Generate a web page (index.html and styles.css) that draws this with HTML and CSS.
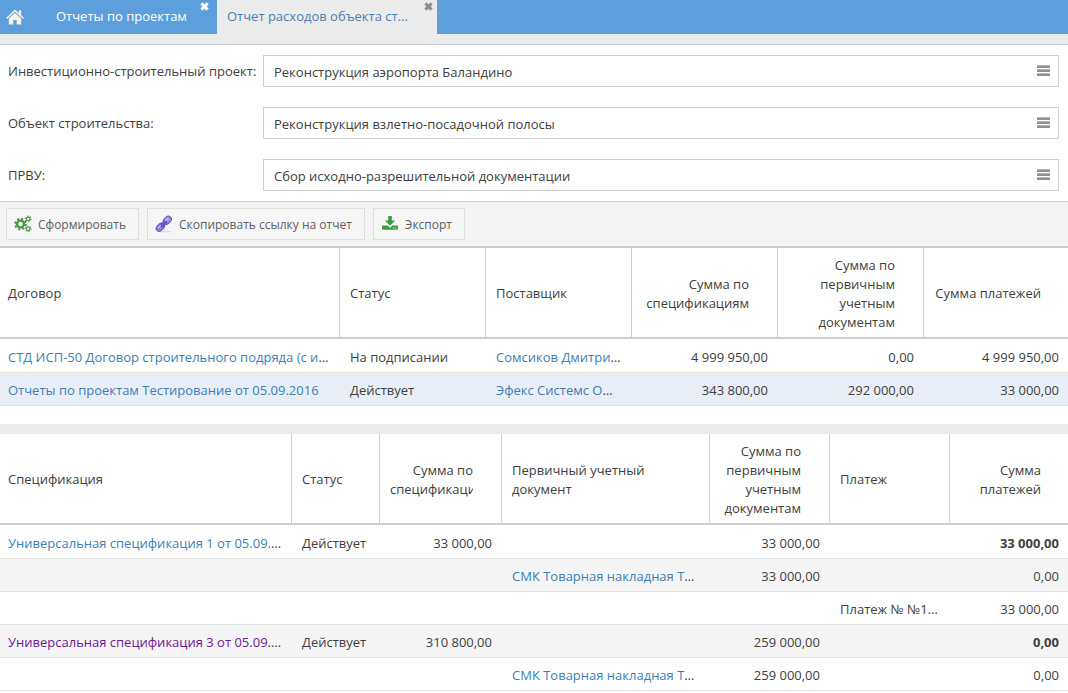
FILE: index.html
```html
<!DOCTYPE html>
<html lang="ru">
<head>
<meta charset="utf-8">
<meta name="viewport" content="width=device-width, initial-scale=1">
<title>Отчет расходов объекта строительства</title>
<link rel="stylesheet" href="styles.css">
</head>
<body>
<nav class="tabs">
  <a class="tab-home" href="#" aria-label="Домой">
    <svg width="18" height="16" viewBox="0 0 18 16" fill="#f7f1e6"><path d="M9 .5 12.800 4V1.300h2.400v5L18 9l-1 1.100L9 2.700 1 10.100 0 9z"/><path d="M9 3.900l6.200 5.700v5.900h-4.500v-4.600H7.300v4.600H2.800V9.600z"/></svg>
  </a>
  <div class="tab">
    <a class="tab-title" href="#">Отчеты по проектам</a>
    <button class="tab-close" type="button" aria-label="Закрыть"><svg width="9" height="9" viewBox="0 0 9 9"><path d="M1.400 1.400l6.200 6.200M7.600 1.400L1.400 7.600" stroke="currentColor" stroke-width="3"/></svg></button>
  </div>
  <div class="tab tab-active">
    <a class="tab-title" href="#">Отчет расходов объекта ст…</a>
    <button class="tab-close" type="button" aria-label="Закрыть"><svg width="9" height="9" viewBox="0 0 9 9"><path d="M1.400 1.400l6.200 6.200M7.600 1.400L1.400 7.600" stroke="currentColor" stroke-width="3"/></svg></button>
  </div>
</nav>
<div class="tab-strip"></div>
<main>
  <form class="filters">
    <label for="project">Инвестиционно-строительный проект:</label>
    <div class="field">
      <input id="project" type="text" value="Реконструкция аэропорта Баландино">
      <button class="picker" type="button" aria-label="Выбрать проект"><svg width="13" height="11" viewBox="0 0 13 11" shape-rendering="crispEdges"><path fill="#b4b4b4" d="M0 0h13v1H0zM0 4h13v1H0zM0 8h13v1H0z"/><path fill="#919191" d="M0 1h13v2H0zM0 5h13v2H0zM0 9h13v2H0z"/></svg></button>
    </div>
    <label for="object">Объект строительства:</label>
    <div class="field">
      <input id="object" type="text" value="Реконструкция взлетно-посадочной полосы">
      <button class="picker" type="button" aria-label="Выбрать объект"><svg width="13" height="11" viewBox="0 0 13 11" shape-rendering="crispEdges"><path fill="#b4b4b4" d="M0 0h13v1H0zM0 4h13v1H0zM0 8h13v1H0z"/><path fill="#919191" d="M0 1h13v2H0zM0 5h13v2H0zM0 9h13v2H0z"/></svg></button>
    </div>
    <label for="prvu">ПРВУ:</label>
    <div class="field">
      <input id="prvu" type="text" value="Сбор исходно-разрешительной документации">
      <button class="picker" type="button" aria-label="Выбрать ПРВУ"><svg width="13" height="11" viewBox="0 0 13 11" shape-rendering="crispEdges"><path fill="#b4b4b4" d="M0 0h13v1H0zM0 4h13v1H0zM0 8h13v1H0z"/><path fill="#919191" d="M0 1h13v2H0zM0 5h13v2H0zM0 9h13v2H0z"/></svg></button>
    </div>
  </form>
  <div class="toolbar">
    <button class="tool" type="button">
      <svg width="18" height="18" viewBox="0 0 18 18" fill="none" stroke="#4a9646">
        <circle cx="6.500" cy="9" r="3.500" stroke-width="2.400"/>
        <circle cx="6.500" cy="9" r="5.400" stroke-width="1.800" stroke-dasharray="2.200 2.040"/>
        <circle cx="14.200" cy="3.900" r="1.800" stroke-width="1.200"/>
        <circle cx="14.200" cy="3.900" r="2.800" stroke-width="1.100" stroke-dasharray="1.300 1.632"/>
        <circle cx="14.200" cy="13.800" r="1.800" stroke-width="1.200"/>
        <circle cx="14.200" cy="13.800" r="2.800" stroke-width="1.100" stroke-dasharray="1.300 1.632"/>
      </svg>
      Сформировать
    </button>
    <button class="tool" type="button">
      <svg width="18" height="18" viewBox="0 0 18 18">
        <path d="M5 16.700h11" stroke="#d5d5de" stroke-width="1"/>
        <g transform="rotate(-45 9 9)" stroke="#5d55b4">
          <rect x="-.5" y="5.700" width="9" height="6" rx="3" fill="#8d84dc"/>
          <rect x="9.500" y="5.700" width="9" height="6" rx="3" fill="#9c94e6"/>
          <rect x="5.500" y="7.300" width="7" height="3" rx="1.500" fill="#6a60c4"/>
          <path d="M1.800 7.700h4M12 7.700h4" stroke="#cfcaf8"/>
        </g>
      </svg>
      Скопировать ссылку на отчет
    </button>
    <button class="tool" type="button">
      <svg width="18" height="18" viewBox="0 0 18 18">
        <path fill="#429a3e" fill-rule="evenodd" d="M7.200 1h3.600v4.600h3.400L9 10.800 3.800 5.600h3.400zM2 10.500h4.700L9 12.700l2.300-2.200H16q1 0 1 1v2.300q0 1-1 1H2q-1 0-1-1v-2.300q0-1 1-1zM12 12.600v1h1v-1zM14.200 12.600v1h1v-1z"/>
      </svg>
      Экспорт
    </button>
  </div>
  <table class="grid contracts">
    <colgroup><col><col class="w146"><col class="w146"><col class="w146"><col class="w146"><col class="w144"></colgroup>
    <thead>
      <tr><th>Договор</th><th>Статус</th><th>Поставщик</th><th class="num">Сумма по спецификациям</th><th class="num">Сумма по первичным учетным документам</th><th class="num">Сумма платежей</th></tr>
    </thead>
    <tbody>
      <tr><td><a href="#">СТД ИСП-50 Договор строительного подряда (с и</a>…</td><td>На подписании</td><td><a href="#">Сомсиков Дмитри</a>…</td><td class="num">4 999 950,00</td><td class="num">0,00</td><td class="num">4 999 950,00</td></tr>
      <tr class="selected"><td><a href="#">Отчеты по проектам Тестирование от 05.09.2016</a></td><td>Действует</td><td><a href="#">Эфекс Системс О</a>…</td><td class="num">343 800,00</td><td class="num">292 000,00</td><td class="num">33 000,00</td></tr>
    </tbody>
  </table>
  <div class="splitter"></div>
  <table class="grid specs">
    <colgroup><col><col class="w88"><col class="w122"><col class="w208"><col class="w120"><col class="w120"><col class="w118"></colgroup>
    <thead>
      <tr><th>Спецификация</th><th>Статус</th><th class="num"><div class="clip">Сумма по спецификациям</div></th><th>Первичный учетный документ</th><th class="num">Сумма по первичным учетным документам</th><th>Платеж</th><th class="num">Сумма платежей</th></tr>
    </thead>
    <tbody>
      <tr><td><a href="#">Универсальная спецификация 1 от 05.09.</a>…</td><td>Действует</td><td class="num">33 000,00</td><td></td><td class="num">33 000,00</td><td></td><td class="num"><b>33 000,00</b></td></tr>
      <tr><td></td><td></td><td></td><td><a href="#">СМК Товарная накладная Т</a>…</td><td class="num">33 000,00</td><td></td><td class="num">0,00</td></tr>
      <tr><td></td><td></td><td></td><td></td><td></td><td>Платеж № №1…</td><td class="num">33 000,00</td></tr>
      <tr><td><a class="seen" href="#">Универсальная спецификация 3 от 05.09.</a>…</td><td>Действует</td><td class="num">310 800,00</td><td></td><td class="num">259 000,00</td><td></td><td class="num"><b>0,00</b></td></tr>
      <tr><td></td><td></td><td></td><td><a href="#">СМК Товарная накладная Т</a>…</td><td class="num">259 000,00</td><td></td><td class="num">0,00</td></tr>
    </tbody>
  </table>
</main>
</body>
</html>
```

FILE: styles.css
```css
* {
  box-sizing: border-box;
}

body {
  margin: 0;
  background: #fff;
  color: #404040;
  font: 13px/19px "Open Sans", "Noto Sans", sans-serif;
}

a {
  color: #3c7fb5;
  text-decoration: none;
}

button {
  margin: 0;
  font: inherit;
  cursor: pointer;
}

svg {
  display: block;
  flex: none;
}

/* Tabs */
.tabs {
  display: flex;
  height: 34px;
  background: #5c9fdc;
}

.tab-home {
  display: flex;
  align-items: center;
  width: 46px;
  padding-left: 6px;
}

.tab {
  display: flex;
  justify-content: space-between;
  width: 171px;
  padding: 0 8px 0 10px;
}

.tab-title {
  color: #fff;
  line-height: 32px;
  white-space: nowrap;
}

.tab-close {
  align-self: flex-start;
  padding: 2px 0 0;
  border: 0;
  background: none;
  color: #fff;
}

.tab-active {
  width: 220px;
  padding-right: 4px;
  background: #ebebeb;
}

.tab-active .tab-title {
  color: #4c80b4;
}

.tab-active .tab-close {
  color: #8c8c8c;
}

.tab-strip {
  height: 11px;
  border-bottom: 1px solid #cdd2d8;
  background: #ebebeb;
}

/* Filters */
.filters {
  display: grid;
  grid-template-columns: 255px 1fr;
  row-gap: 20px;
  padding: 10px 9px 10px 8px;
}

.filters label {
  line-height: 32px;
  white-space: nowrap;
}

.field {
  display: flex;
  height: 32px;
  border: 1px solid #cfcfcf;
}

.field input {
  flex: 1;
  min-width: 0;
  padding: 2px 10px 0;
  border: 0;
  outline: 0;
  background: none;
  color: inherit;
  font: inherit;
}

.picker {
  display: flex;
  align-items: center;
  padding: 0 8px 2px;
  border: 0;
  background: none;
}

/* Toolbar */
.toolbar {
  display: flex;
  gap: 8px;
  padding: 6px;
  border-top: 1px solid #cfcfcf;
  border-bottom: 2px solid #cdcdcd;
  background: #f4f4f4;
}

.tool {
  display: flex;
  align-items: center;
  gap: 6px;
  height: 32px;
  padding: 0 12px 0 7px;
  border: 1px solid #e0e0e0;
  background: #f6f6f6;
  color: #606060;
  font-size: 12px;
  white-space: nowrap;
}

/* Tables */
.grid {
  width: 100%;
  border-spacing: 0;
  table-layout: fixed;
}

.w88 { width: 88px; }
.w118 { width: 118px; }
.w120 { width: 120px; }
.w122 { width: 122px; }
.w144 { width: 144px; }
.w146 { width: 146px; }
.w208 { width: 208px; }

.grid th {
  height: 91px;
  padding: 2px 28px 0 10px;
  border-right: 1px solid #cfcfcf;
  border-bottom: 2px solid #cdcdcd;
  font-weight: 400;
  text-align: left;
}

.grid td {
  height: 33px;
  padding: 2px 10px 0;
  overflow: hidden;
  border-bottom: 1px solid #e3e3e3;
  line-height: 30px;
  text-overflow: ellipsis;
  white-space: nowrap;
}

.grid tbody tr:first-child td {
  height: 34px;
  padding-top: 3px;
}

.grid th:first-child,
.grid td:first-child {
  padding-left: 8px;
}

.grid th:last-child {
  padding-right: 27px;
  border-right: 0;
}

.grid td:last-child {
  padding-right: 9px;
}

.grid .num {
  text-align: right;
}

.contracts td {
  border-bottom-color: #e6e6d4;
}

.selected {
  background: #e9eef6;
}

.specs tbody tr:nth-child(even) {
  background: #f5f5f5;
}

.clip {
  overflow: hidden;
}

.grid .seen {
  color: #6f1598;
}

.splitter {
  height: 10px;
  margin-top: 18px;
  background: #ebebeb;
}
```
